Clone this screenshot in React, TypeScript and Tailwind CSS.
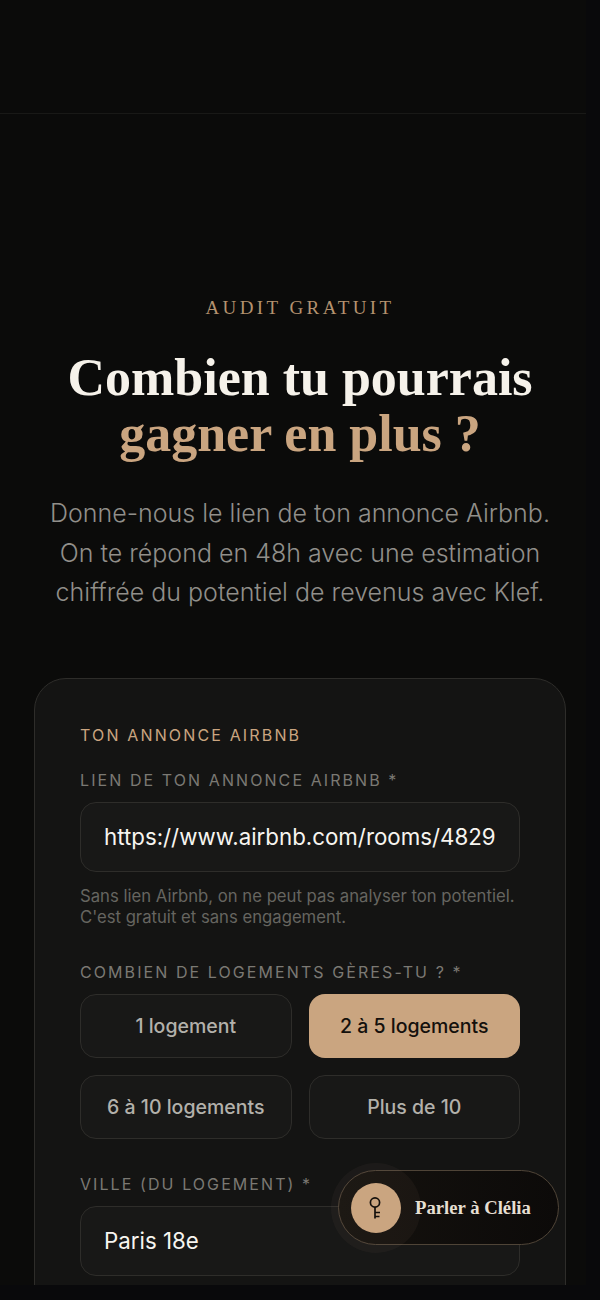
const sans = "font-['Inter','Liberation_Sans',sans-serif]"
const serif = "font-['Liberation_Serif','DejaVu_Serif',serif]"

function Label({ children }: { children: React.ReactNode }) {
  return <div className="text-[16px] leading-[20px] font-normal tracking-[2.08px] text-[#7b7973] uppercase whitespace-nowrap">{children}</div>
}

function Field({ children }: { children: React.ReactNode }) {
  return (
    <div className="h-[70px] rounded-2xl border border-[#2e2d2a] bg-[#181817] px-[23px] flex items-center text-[22.3px] text-[#f7f5f0] whitespace-nowrap overflow-hidden">
      {children}
    </div>
  )
}

function Choice({ label, active }: { label: string; active?: boolean }) {
  return (
    <button
      type="button"
      className={`h-[64px] pt-0.5 rounded-2xl text-[19.5px] font-medium ${active ? 'bg-[#caa580] text-[#14100c]' : 'border border-[#2e2d2a] bg-[#181817] text-[#b3b1ab]'}`}
    >
      {label}
    </button>
  )
}

function KeyIcon() {
  return (
    <svg width="18" height="24" viewBox="0 0 18 24" fill="none" stroke="#14100c" strokeWidth="1.7">
      <circle cx="8" cy="6.5" r="4.6" />
      <path d="M8 11v11.5M8 16.5h5M8 20.5h4.5" />
    </svg>
  )
}

export default function App() {
  return (
    <div className={`relative w-[600px] h-[1300px] overflow-hidden bg-[#0b0b0a] ${sans}`}>
      <header className="h-[114px] border-b border-[#191917]" />

      <section className="pt-[182px] text-center">
        <p className={`${serif} text-[19px] leading-[24px] tracking-[0.18em] text-[#b4926f] uppercase`}>Audit gratuit</p>
        <h1 className={`${serif} mt-[30px] text-[52px] leading-[56px] font-bold text-[#f6f2ea]`}>
          Combien tu pourrais
          <br />
          <span className="text-[#caa580]">gagner en plus ?</span>
        </h1>
        <p className="mt-[32px] text-[25px] leading-[39.7px] font-light text-[#918f8a] whitespace-nowrap">
          Donne-nous le lien de ton annonce Airbnb.
          <br />
          On te répond en 48h avec une estimation
          <br />
          chiffrée du potentiel de revenus avec Klef.
        </p>
      </section>

      <section className="mt-[65px] mx-[34px] rounded-t-[32px] border border-[#2e2d2a] bg-[#141413] px-[45px] pt-[46px] pb-10">
        <div className="text-[16px] leading-[20px] tracking-[2.15px] text-[#caa580] uppercase">Ton annonce Airbnb</div>

        <div className="mt-[25px]">
          <Label>Lien de ton annonce Airbnb *</Label>
        </div>
        <div className="mt-[12px]">
          <Field>https://www.airbnb.com/rooms/4829</Field>
        </div>
        <p className="mt-[14px] text-[16.7px] leading-[21px] text-[#666560] whitespace-nowrap">
          Sans lien Airbnb, on ne peut pas analyser ton potentiel.
          <br />
          C'est gratuit et sans engagement.
        </p>

        <div className="mt-[34px]">
          <Label>Combien de logements gères-tu ? *</Label>
        </div>
        <div className="mt-[12px] grid grid-cols-2 gap-x-[17px] gap-y-[17px]">
          <Choice label="1 logement" />
          <Choice label="2 à 5 logements" active />
          <Choice label="6 à 10 logements" />
          <Choice label="Plus de 10" />
        </div>

        <div className="mt-[35px]">
          <Label>Ville (du logement) *</Label>
        </div>
        <div className="mt-[12px]">
          <Field>Paris 18e</Field>
        </div>
      </section>

      {/* browser edge strips */}
      <div className="absolute top-0 bottom-0 right-0 w-[14px] bg-[#09090b]" />
      <div className="absolute left-0 right-0 bottom-0 h-[15px] bg-[#09090b]" />

      {/* floating chat pill */}
      <div className="absolute left-[338px] top-[1170px] w-[221px] h-[75px] rounded-full border border-[#4f4437] bg-gradient-to-r from-[#15120e] to-[#0c0a09] flex items-center">
        <div className="absolute left-[-8px] top-[-8px] size-[90px] rounded-full bg-[#caa580]/5" />
        <div className="relative ml-[12px] size-[50px] rounded-full bg-[#caa580] flex items-center justify-center">
          <KeyIcon />
        </div>
        <span className={`${serif} relative ml-[14px] pt-0.5 text-[18.7px] font-bold text-[#e6dfd2] whitespace-nowrap`}>Parler à Clélia</span>
      </div>
    </div>
  )
}
